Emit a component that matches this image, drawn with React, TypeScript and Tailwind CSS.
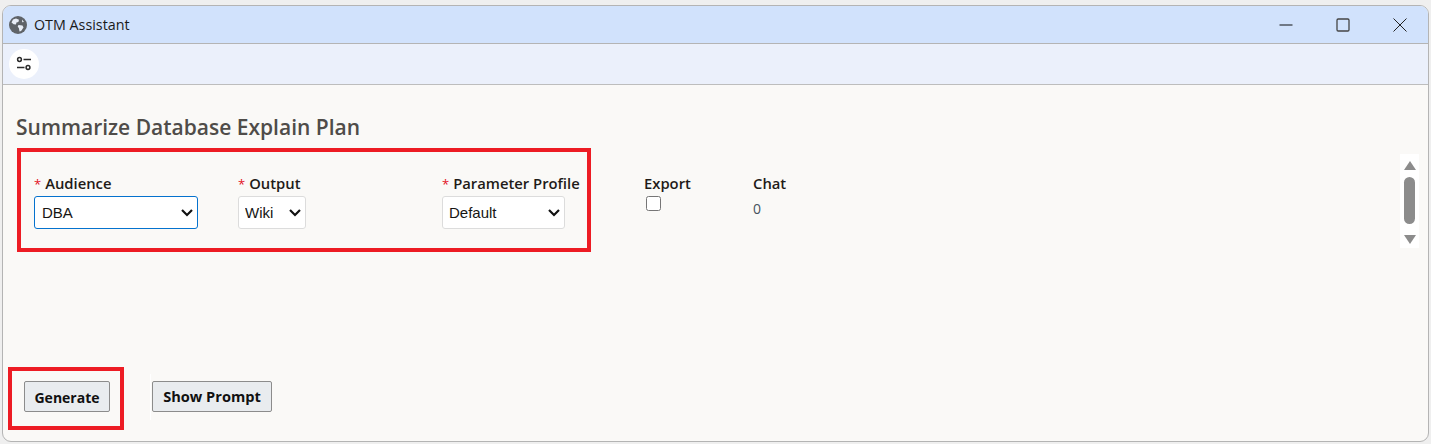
const labelClass = "block h-[23px] text-[14.8px] leading-[20px] font-semibold text-[#1f1b18] whitespace-nowrap";
const selectClass = "block h-[33px] w-full appearance-none rounded-[3px] border bg-white pl-[6px] pt-[1px] text-[15px] text-[#161513] font-['Liberation_Sans',sans-serif]";

function Required() {
  return <span className="mr-[4px] text-[13px] font-normal text-[#e3131f]">*</span>;
}

function Chevron() {
  return (
    <svg width="12" height="8" viewBox="0 0 12 8" fill="none" stroke="#111" strokeWidth="2.2" className="pointer-events-none absolute right-[5px] top-[13px]">
      <path d="M1 1l5 5 5-5" />
    </svg>
  );
}

function Globe() {
  return (
    <svg width="18" height="18" viewBox="0 0 18 18">
      <circle cx="9" cy="9" r="9" fill="#5f6368" />
      <path d="M4 3.5l3-1 3 1.2-.6 2.3-2 .6-.4 2-2.4-.4L2.5 6.5zM9.5 9l4 .6 1 2-2.4 3.4-1.6.4-.6-3.2-1.2-1.6zM13 3.5l2 2.5-1.8.2z" fill="#e8edf6" />
    </svg>
  );
}

function Sliders() {
  return (
    <svg width="16" height="16" viewBox="0 0 16 16" fill="none" stroke="#2b2b2b" strokeWidth="1.5">
      <circle cx="3.5" cy="3.5" r="1.9" />
      <path d="M7.5 3.5h7.5M1 11.5h7.5" />
      <circle cx="12" cy="11.5" r="1.9" />
    </svg>
  );
}

export default function App() {
  return (
    <div className="h-[444px] w-[1431px] overflow-hidden bg-[#efefef] px-[2px] pt-[5px] pb-[2px] font-['Open_Sans',sans-serif]">
      <div className="flex h-[437px] flex-col overflow-hidden rounded-[9px] border border-[#b4b4b4] bg-[#faf9f7]">
        <div className="flex h-[38px] items-center border-b border-[#b4b4b4] bg-[#d1e2fc] pl-[6px]">
          <Globe />
          <span className="ml-[7px] text-[14.3px] text-[#1a1a1a]">OTM Assistant</span>
          <div className="ml-auto flex items-center pr-[21px]">
            <svg width="14" height="14" viewBox="0 0 14 14" stroke="#111" strokeWidth="1.1"><path d="M0.5 7h13" /></svg>
            <svg width="14" height="14" viewBox="0 0 14 14" fill="none" stroke="#444" strokeWidth="1.3" className="ml-[43px]"><rect x="1" y="1" width="12" height="12" rx="1.2" /></svg>
            <svg width="14" height="14" viewBox="0 0 14 14" stroke="#222" strokeWidth="1" className="ml-[43px]"><path d="M0.5 0.5l13 13M13.5 0.5l-13 13" /></svg>
          </div>
        </div>
        <div className="flex h-[41px] items-center border-b border-[#bdbdbd] bg-[#ebf0fb] pl-[6px]">
          <button className="flex h-[30px] w-[30px] items-center justify-center rounded-full bg-white">
            <Sliders />
          </button>
        </div>
        <div className="flex flex-1 flex-col pl-[13px]">
          <h1 className="mt-[28px] h-[28px] text-[21px] leading-[28px] font-semibold text-[#4f4c49]">Summarize Database Explain Plan</h1>
          <div className="flex items-start">
            <div className="ml-[1px] mt-[7px] flex h-[104px] w-[574px] border-4 border-[#ed1c24] pl-[13px] pt-[21px]">
              <div className="w-[204px]">
                <label className={labelClass}><Required />Audience</label>
                <div className="relative w-[164px]">
                  <select defaultValue="DBA" className={`${selectClass} border-[#0572ce] pl-[7px]`}>
                    <option>DBA</option>
                  </select>
                  <Chevron />
                </div>
              </div>
              <div className="w-[204px]">
                <label className={labelClass}><Required />Output</label>
                <div className="relative w-[68px]">
                  <select defaultValue="Wiki" className={`${selectClass} border-[#dcdcdc]`}>
                    <option>Wiki</option>
                  </select>
                  <Chevron />
                </div>
              </div>
              <div>
                <label className={labelClass}><Required />Parameter Profile</label>
                <div className="relative w-[123px]">
                  <select defaultValue="Default" className={`${selectClass} border-[#dcdcdc]`}>
                    <option>Default</option>
                  </select>
                  <Chevron />
                </div>
              </div>
            </div>
            <div className="ml-[53px] mt-[32px] w-[109px]">
              <label className={labelClass}>Export</label>
              <input type="checkbox" className="ml-[2px] block h-[15px] w-[15px]" />
            </div>
            <div className="mt-[32px]">
              <label className={labelClass}>Chat</label>
              <div className="mt-[2px] text-[14px] text-[#46525e]">0</div>
            </div>
            <div className="ml-auto mr-[9px] mt-[13px] flex h-[94px] w-[19px] flex-col items-center bg-white pt-[7px]">
              <div className="h-0 w-0 border-x-[6.5px] border-b-[9px] border-x-transparent border-b-[#8c8c8c]" />
              <div className="mt-[7px] h-[47px] w-[11px] rounded-full bg-[#8c8c8c]" />
              <div className="mt-[11px] h-0 w-0 border-x-[6.5px] border-t-[9px] border-x-transparent border-t-[#8c8c8c]" />
            </div>
          </div>
          <div className="mt-[115px] flex items-center">
            <div className="-ml-[8px] flex h-[63px] w-[116px] items-center border-4 border-[#ed1c24] pb-[4px] pl-[12px]">
              <button className="h-[31px] w-[86px] rounded-[2px] border border-[#8c8c8c] bg-[#e9ecef] pt-[1px] text-[14px] font-bold text-[#111]">Generate</button>
            </div>
            <div className="mb-[4px] ml-[26px] flex h-[46px] items-center border-l border-white pl-[1px]">
              <button className="h-[31px] w-[120px] rounded-[2px] border border-[#8c8c8c] bg-[#e9ecef] pt-[1px] text-[14.6px] font-bold text-[#111]">Show Prompt</button>
            </div>
          </div>
        </div>
      </div>
    </div>
  );
}
